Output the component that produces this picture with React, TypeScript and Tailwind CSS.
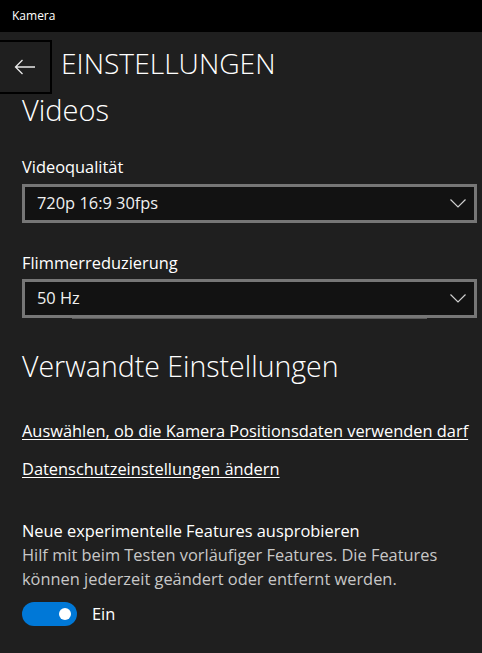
import React, { useState } from 'react';

const font = { fontFamily: '"Open Sans", "Noto Sans", sans-serif' };

const Chevron = () => (
  <svg width="16" height="9" viewBox="0 0 16 9" fill="none" className="text-[#cfcfcf]">
    <path d="M0.5 0.5 L8 8 L15.5 0.5" stroke="currentColor" strokeWidth="1.2" />
  </svg>
);

const Select = ({ value }: { value: string }) => (
  <div className="h-[39px] border-[3px] border-[#767676] bg-[#121212] flex items-center justify-between pl-[12px] pr-[8px]">
    <span className="text-[16.4px] text-[#f0f0f0]">{value}</span>
    <Chevron />
  </div>
);

export default function App() {
  const [on, setOn] = useState(true);

  return (
    <div className="w-full h-[653px] bg-[#1f1f1f] overflow-hidden text-white" style={font}>
      {/* Titelleiste */}
      <div className="h-8 bg-black flex items-center px-3 text-[12px]">Kamera</div>

      {/* Kopf */}
      <div className="mt-2 flex items-center">
        <button className="w-[52px] h-[54px] border-2 border-l-0 border-black flex items-center justify-center">
          <svg width="22" height="16" viewBox="0 0 22 16" fill="none">
            <path d="M21 8 H1.5 M8.5 1 L1.5 8 L8.5 15" stroke="#e8e8e8" strokeWidth="1.3" />
          </svg>
        </button>
        <h1 className="ml-[9px] -mt-[7px] text-[28.2px] font-light leading-none">EINSTELLUNGEN</h1>
      </div>

      <div className="pl-[22px] pr-[5px]">
        <h2 className="-mt-[1px] text-[29px] font-light leading-[34px]">Videos</h2>

        <div className="mt-[30px] text-[16.4px] leading-[20px]">Videoqualität</div>
        <div className="mt-[7px]">
          <Select value="720p 16:9 30fps" />
        </div>

        <div className="mt-[30px] text-[16.4px] leading-[20px]">Flimmerreduzierung</div>
        <div className="mt-[6px] relative">
          <Select value="50 Hz" />
          <div className="absolute left-[50px] top-[39px] w-[355px] h-px bg-[#5a5a5a]" />
        </div>

        <h2 className="mt-[31px] text-[28.5px] font-light leading-[34px]">Verwandte Einstellungen</h2>

        <div className="mt-[37px] flex flex-col gap-[16px] text-[16.4px] leading-[22px]">
          <a className="underline underline-offset-2 w-fit">Auswählen, ob die Kamera Positionsdaten verwenden darf</a>
          <a className="underline underline-offset-2 w-fit">Datenschutzeinstellungen ändern</a>
        </div>

        <div className="mt-[39px] text-[16.4px] leading-[24px] pr-[17px]">
          <div>Neue experimentelle Features ausprobieren</div>
          <div className="text-[#c8c8c8]">
            Hilf mit beim Testen vorläufiger Features. Die Features können jederzeit geändert oder entfernt werden.
          </div>
        </div>

        <div className="mt-[11px] flex items-center">
          <button
            onClick={() => setOn(!on)}
            className={`w-[55px] h-[24px] rounded-full flex items-center px-[6px] ${on ? 'bg-[#0078d7] justify-end' : 'bg-transparent border-2 border-white justify-start'}`}
          >
            <span className="w-[12px] h-[12px] rounded-full bg-white" />
          </button>
          <span className="ml-[15px] text-[16.4px]">{on ? 'Ein' : 'Aus'}</span>
        </div>
      </div>
    </div>
  );
}
